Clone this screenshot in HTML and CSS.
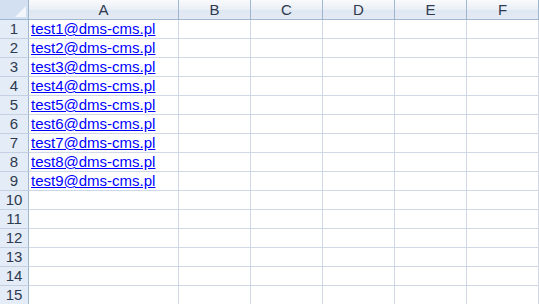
FILE: index.html
```html
<!DOCTYPE html>
<html lang="en">
<head>
    <meta charset="UTF-8">
    <title>Sheet1</title>
    <link rel="stylesheet" href="styles.css">
</head>
<body>
    <div class="sheet">
        <div class="corner"><span class="corner-mark"></span></div>
        <div class="col-head">A</div>
        <div class="col-head">B</div>
        <div class="col-head">C</div>
        <div class="col-head">D</div>
        <div class="col-head">E</div>
        <div class="col-head">F</div>

        <div class="row-head">1</div><div class="cell"><a href="mailto:test1@dms-cms.pl">test1@dms-cms.pl</a></div><div class="cell"></div><div class="cell"></div><div class="cell"></div><div class="cell"></div><div class="cell"></div>
        <div class="row-head">2</div><div class="cell"><a href="mailto:test2@dms-cms.pl">test2@dms-cms.pl</a></div><div class="cell"></div><div class="cell"></div><div class="cell"></div><div class="cell"></div><div class="cell"></div>
        <div class="row-head">3</div><div class="cell"><a href="mailto:test3@dms-cms.pl">test3@dms-cms.pl</a></div><div class="cell"></div><div class="cell"></div><div class="cell"></div><div class="cell"></div><div class="cell"></div>
        <div class="row-head">4</div><div class="cell"><a href="mailto:test4@dms-cms.pl">test4@dms-cms.pl</a></div><div class="cell"></div><div class="cell"></div><div class="cell"></div><div class="cell"></div><div class="cell"></div>
        <div class="row-head">5</div><div class="cell"><a href="mailto:test5@dms-cms.pl">test5@dms-cms.pl</a></div><div class="cell"></div><div class="cell"></div><div class="cell"></div><div class="cell"></div><div class="cell"></div>
        <div class="row-head">6</div><div class="cell"><a href="mailto:test6@dms-cms.pl">test6@dms-cms.pl</a></div><div class="cell"></div><div class="cell"></div><div class="cell"></div><div class="cell"></div><div class="cell"></div>
        <div class="row-head">7</div><div class="cell"><a href="mailto:test7@dms-cms.pl">test7@dms-cms.pl</a></div><div class="cell"></div><div class="cell"></div><div class="cell"></div><div class="cell"></div><div class="cell"></div>
        <div class="row-head">8</div><div class="cell"><a href="mailto:test8@dms-cms.pl">test8@dms-cms.pl</a></div><div class="cell"></div><div class="cell"></div><div class="cell"></div><div class="cell"></div><div class="cell"></div>
        <div class="row-head">9</div><div class="cell"><a href="mailto:test9@dms-cms.pl">test9@dms-cms.pl</a></div><div class="cell"></div><div class="cell"></div><div class="cell"></div><div class="cell"></div><div class="cell"></div>
        <div class="row-head">10</div><div class="cell"></div><div class="cell"></div><div class="cell"></div><div class="cell"></div><div class="cell"></div><div class="cell"></div>
        <div class="row-head">11</div><div class="cell"></div><div class="cell"></div><div class="cell"></div><div class="cell"></div><div class="cell"></div><div class="cell"></div>
        <div class="row-head">12</div><div class="cell"></div><div class="cell"></div><div class="cell"></div><div class="cell"></div><div class="cell"></div><div class="cell"></div>
        <div class="row-head">13</div><div class="cell"></div><div class="cell"></div><div class="cell"></div><div class="cell"></div><div class="cell"></div><div class="cell"></div>
        <div class="row-head">14</div><div class="cell"></div><div class="cell"></div><div class="cell"></div><div class="cell"></div><div class="cell"></div><div class="cell"></div>
        <div class="row-head">15</div><div class="cell"></div><div class="cell"></div><div class="cell"></div><div class="cell"></div><div class="cell"></div><div class="cell"></div>
    </div>
</body>
</html>
```

FILE: styles.css
```css
body {
    margin: 0;
    padding: 0;
    background-color: #ffffff;
    font-family: "Liberation Sans", Arial, sans-serif;
    font-size: 15px;
    overflow: hidden;
}

.sheet {
    display: grid;
    grid-template-columns: 29px 150px repeat(5, 72px);
    grid-template-rows: 20px;
    grid-auto-rows: 19px;
}

.sheet > div {
    box-sizing: border-box;
}

.corner {
    position: relative;
    background-color: #d3e0f1;
    border-right: 1px solid #9eb6ce;
    border-bottom: 1px solid #9eb6ce;
}

/* little triangle in the select-all box */
.corner-mark {
    position: absolute;
    right: 2px;
    bottom: 2px;
    width: 0;
    height: 0;
    border-left: 11px solid transparent;
    border-bottom: 11px solid #f2f5f9;
}

.col-head {
    background: linear-gradient(to bottom, #f9fafc 0%, #eaeff6 50%, #dee6f1 51%, #e4ebf5 100%);
    border-right: 1px solid #9eb6ce;
    border-bottom: 1px solid #9eb6ce;
    color: #2d3a4f;
    text-align: center;
    line-height: 19px;
}

.row-head {
    background-color: #e4ecf7;
    border-right: 1px solid #9eb6ce;
    border-bottom: 1px solid #c5d1e3;
    color: #2d3a4f;
    text-align: center;
    line-height: 18px;
}

.cell {
    border-right: 1px solid #d0d7e5;
    border-bottom: 1px solid #d0d7e5;
    padding-left: 2px;
    line-height: 18px;
    white-space: nowrap;
}

.cell a {
    color: #0000ff;
    text-decoration: underline;
}
```
